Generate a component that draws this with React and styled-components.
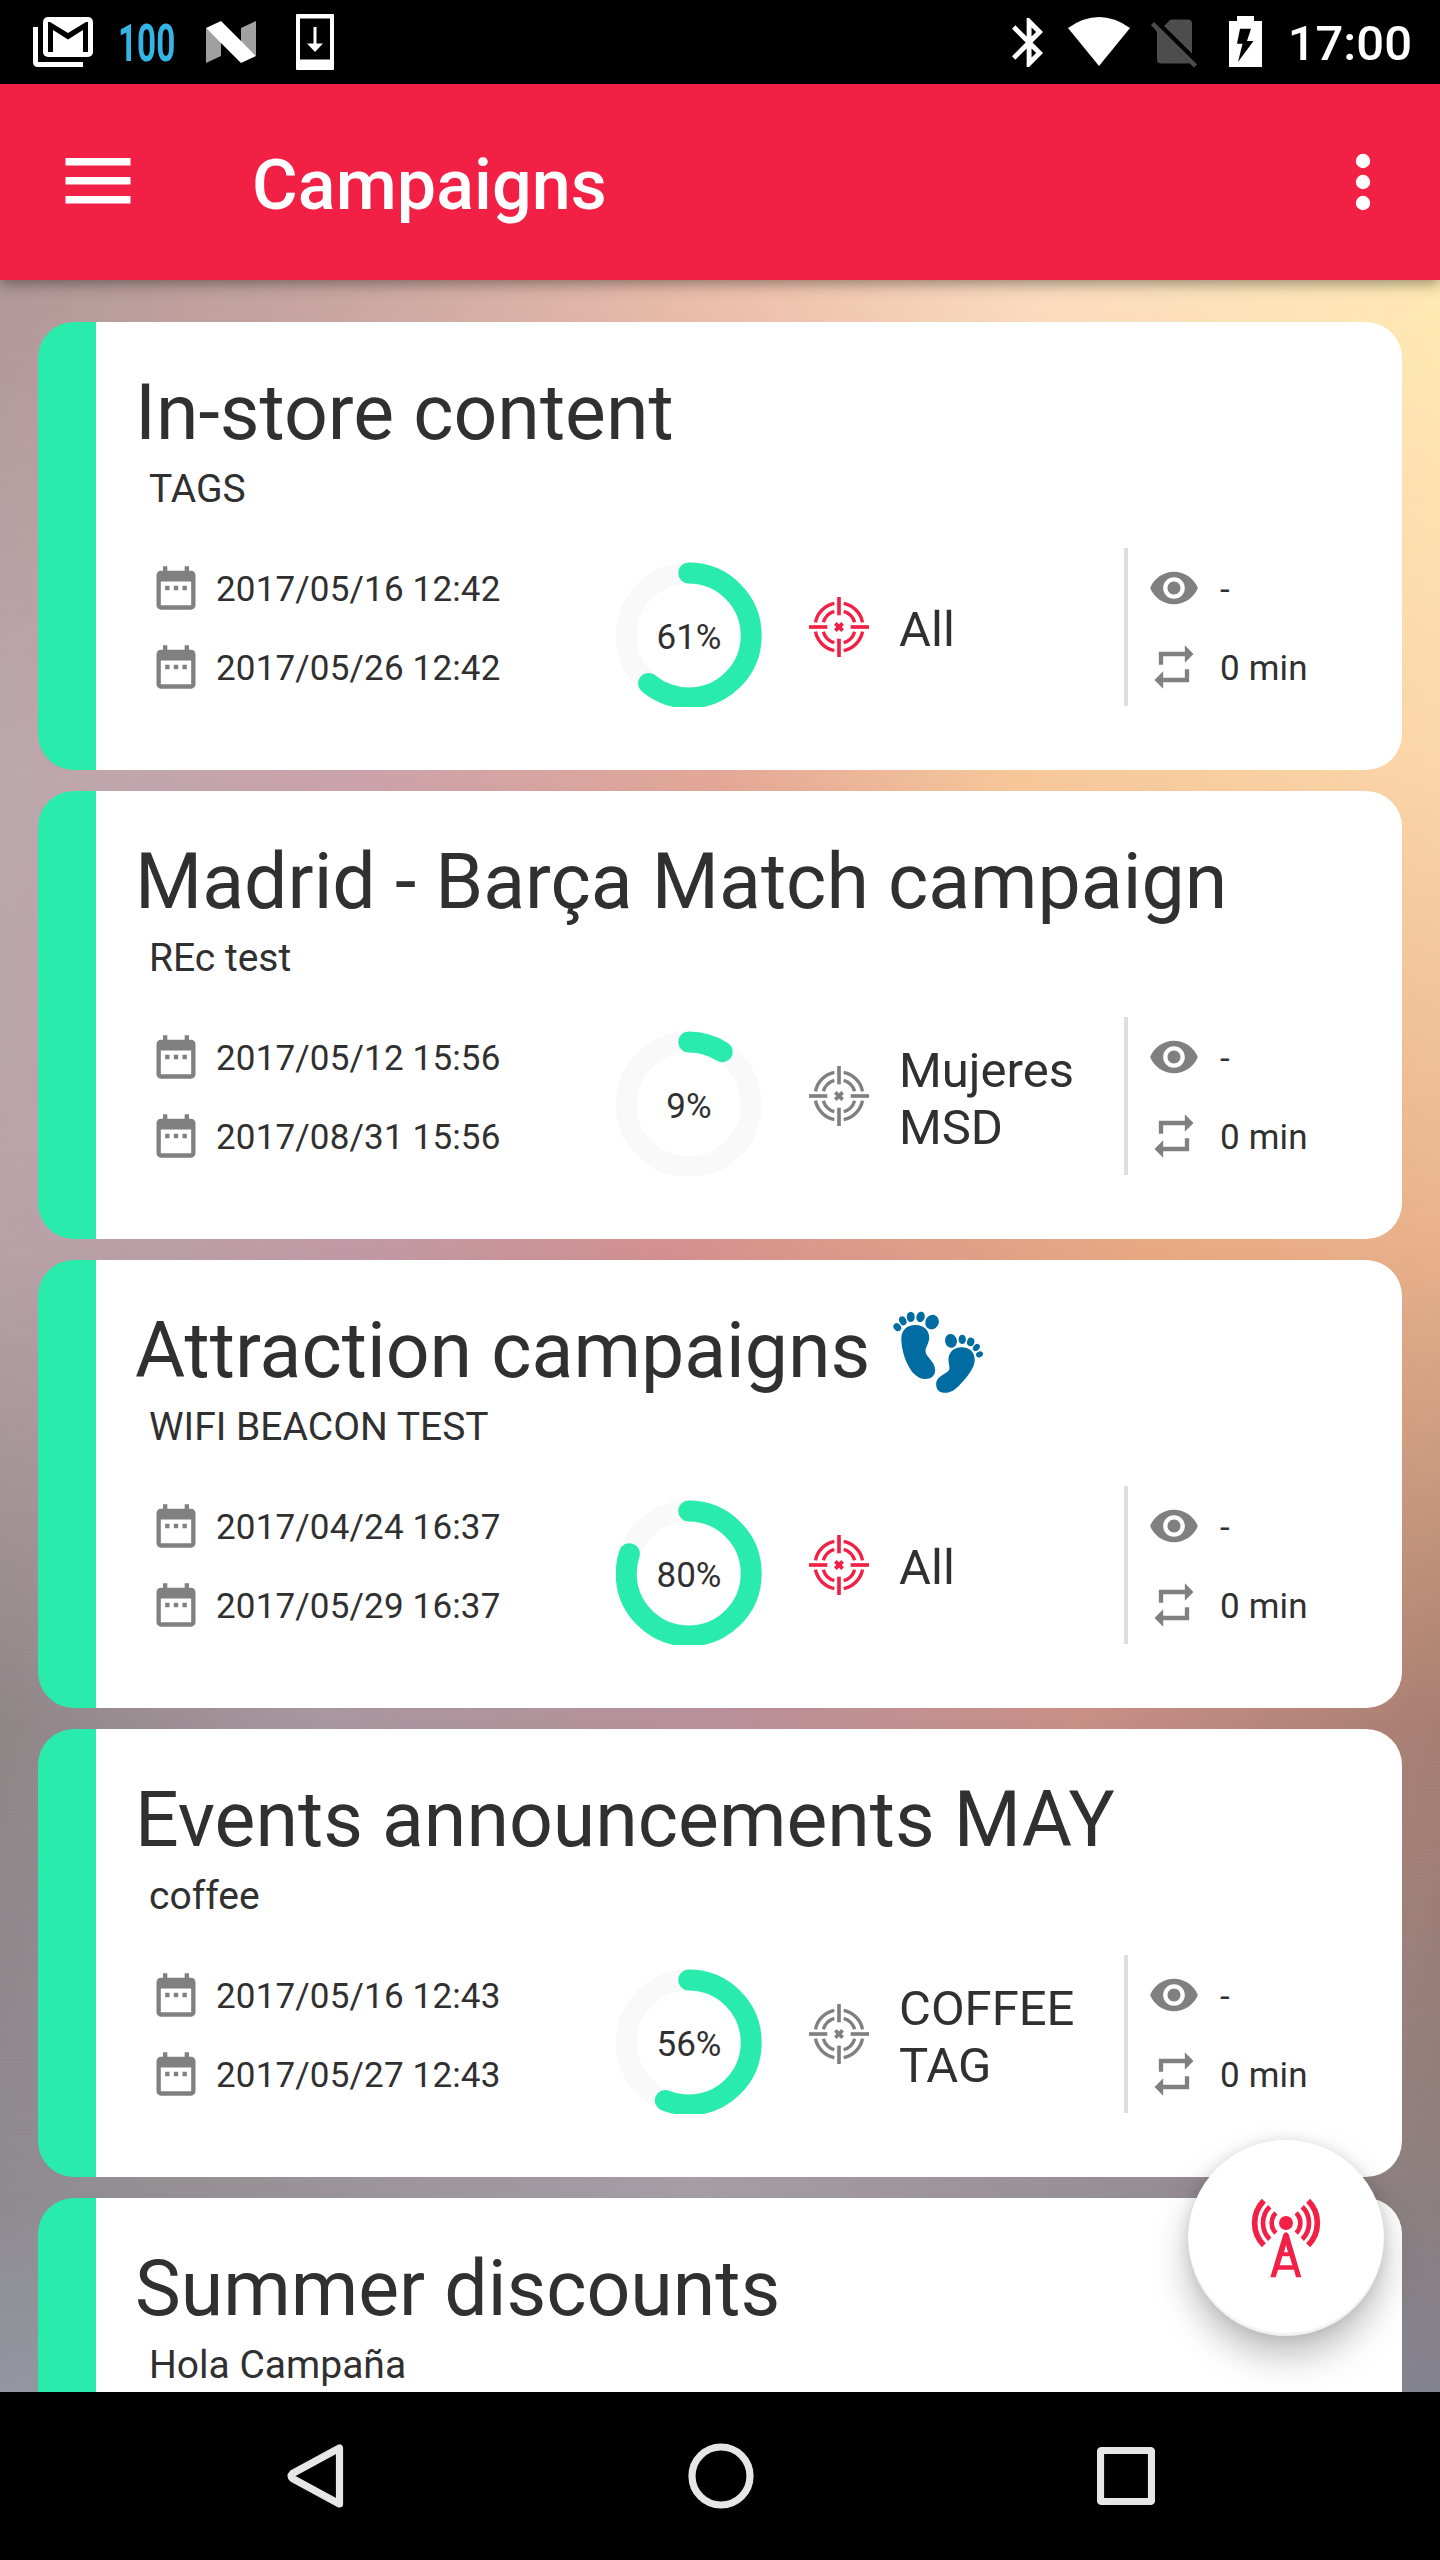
import React from 'react'
import styled, { createGlobalStyle } from 'styled-components'

const GREEN = '#29ecac'
const RED = '#f32046'
const GREY = '#808080'

const campaigns = [
  {
    id: 1,
    title: 'In-store content',
    subtitle: 'TAGS',
    from: '2017/05/16 12:42',
    to: '2017/05/26 12:42',
    progress: 61,
    target: 'All'
  },
  {
    id: 2,
    title: 'Madrid - Barça Match campaign',
    subtitle: 'REc test',
    from: '2017/05/12 15:56',
    to: '2017/08/31 15:56',
    progress: 9,
    target: 'Mujeres MSD'
  },
  {
    id: 3,
    title: 'Attraction campaigns',
    footprints: true,
    subtitle: 'WIFI BEACON TEST',
    from: '2017/04/24 16:37',
    to: '2017/05/29 16:37',
    progress: 80,
    target: 'All'
  },
  {
    id: 4,
    title: 'Events announcements MAY',
    subtitle: 'coffee',
    from: '2017/05/16 12:43',
    to: '2017/05/27 12:43',
    progress: 56,
    target: 'COFFEE TAG'
  },
  {
    id: 5,
    title: 'Summer discounts',
    subtitle: 'Hola Campaña'
  }
]

// horizontal colour rows of the wallpaper, each one fades into the next
const bands = [
  { start: 0, end: 0, colors: '#b29899 0%, #cba8a1 25%, #edbfac 50%, #fadcc0 72%, #ffeab4 100%' },
  { start: 10, end: 500, colors: '#bba8ac 0%, #cba2ab 25%, #e3a797 50%, #f6c699 70%, #fad5a8 100%' },
  { start: 500, end: 970, colors: '#b8a2a8 0%, #bf99a5 25%, #d2908f 46%, #e8a982 80%, #e8b18a 100%' },
  { start: 970, end: 1438, colors: '#8f8688 0%, #a8969e 22%, #b8909a 50%, #c98f85 75%, #a87f72 100%' },
  { start: 1438, end: 1907, colors: '#8f8b8f 0%, #a69da5 48%, #968d95 80%, #8c7e7e 100%' },
  { start: 1907, end: 2112, colors: '#9296a0 0%, #9a98a2 50%, #82828e 100%' }
]

const DateIcon = () => (
  <Glyph viewBox='0 0 24 24'>
    <path d='M9 11H7v2h2v-2zm4 0h-2v2h2v-2zm4 0h-2v2h2v-2zm2-7h-1V2h-2v2H8V2H6v2H5c-1.11 0-1.99.9-1.99 2L3 20c0 1.1.89 2 2 2h14c1.1 0 2-.9 2-2V6c0-1.1-.9-2-2-2zm0 16H5V9h14v11z' />
  </Glyph>
)

const EyeIcon = () => (
  <Glyph viewBox='0 0 24 24'>
    <path d='M12 4.5C7 4.5 2.73 7.61 1 12c1.73 4.39 6 7.5 11 7.5s9.27-3.11 11-7.5c-1.73-4.39-6-7.5-11-7.5zM12 17c-2.76 0-5-2.24-5-5s2.24-5 5-5 5 2.24 5 5-2.24 5-5 5zm0-8c-1.66 0-3 1.34-3 3s1.34 3 3 3 3-1.34 3-3-1.34-3-3-3z' />
  </Glyph>
)

const RepeatIcon = () => (
  <Glyph viewBox='0 0 24 24'>
    <path d='M7 7h10v3l4-4-4-4v3H5v6h2V7zm10 10H7v-3l-4 4 4 4v-3h12v-6h-2v4z' />
  </Glyph>
)

const TargetIcon = ({ color }) => (
  <svg width='60' height='60' viewBox='0 0 180 180' fill='none' stroke={color}>
    {[0, 90, 180, 270].map((angle) => (
      <g key={angle} transform={`rotate(${angle} 90 90)`}>
        <path strokeWidth='11' d='M90 0V55' />
        <path strokeWidth='10' d='M104 19.4A72 72 0 0 1 160.6 76M104 43A49 49 0 0 1 137 76' />
      </g>
    ))}
    <path strokeWidth='11' d='M79 79L101 101M101 79L79 101' />
  </svg>
)

const Footprints = () => (
  <FootprintsSvg viewBox='98 150 274 252'>
    <path d='M123 235C124 210 140 195 165 195C192 195 208 212 207 235C206 250 195 262 196 275C197 290 225 305 225 330C225 348 212 357 195 357C150 357 123 280 123 235z' />
    <ellipse cx='111' cy='201' rx='10.5' ry='13' transform='rotate(-42 111 201)' />
    <ellipse cx='127.5' cy='182' rx='10.5' ry='14' transform='rotate(-25 127.5 182)' />
    <ellipse cx='151.5' cy='170.5' rx='12' ry='15.5' />
    <ellipse cx='181' cy='170.5' rx='12.5' ry='16' transform='rotate(15 181 170.5)' />
    <ellipse cx='215.5' cy='186' rx='20' ry='22.5' transform='rotate(30 215.5 186)' />
    <path d='M305 262C330 262 344 278 344 300C344 325 318 355 300 374C285 390 272 399 255 399C238 399 228 390 228 373C228 345 268 342 268 325C268 315 265 310 265 300C265 278 280 262 305 262z' />
    <ellipse cx='272.5' cy='242.5' rx='18' ry='21' transform='rotate(-12 272.5 242.5)' />
    <ellipse cx='306.5' cy='238' rx='11' ry='14' />
    <ellipse cx='332' cy='245.5' rx='11' ry='13' transform='rotate(15 332 245.5)' />
    <ellipse cx='349' cy='262.5' rx='9' ry='12' transform='rotate(42 349 262.5)' />
    <ellipse cx='358.5' cy='283' rx='8.5' ry='11' transform='rotate(65 358.5 283)' />
  </FootprintsSvg>
)

const TowerIcon = () => (
  <svg width='72' height='82' viewBox='330 290 216 246' fill='none' stroke={RED}>
    <circle cx='438' cy='368' r='21' fill={RED} stroke='none' />
    {[0, 180].map((angle) => (
      <g key={angle} transform={`rotate(${angle} 438 368)`}>
        <path strokeWidth='14' d='M468.4 337.6A43 43 0 0 1 468.4 398.4' />
        <path strokeWidth='14' d='M486.8 319.2A69 69 0 0 1 486.8 416.8' />
        <path strokeWidth='17' d='M504.5 301.5A94 94 0 0 1 504.5 434.5' />
      </g>
    ))}
    <path
      fill={RED}
      stroke='none'
      fillRule='evenodd'
      d='M430 402Q438 390 446 402L484 531H468L462 508H414L407 531H391zM438 434L432 456H444zM427 468L419 495H457L449 468z'
    />
  </svg>
)

const ProgressRing = ({ value }) => {
  const radius = 62.5
  const length = 2 * Math.PI * radius
  return (
    <Ring>
      <svg width='146' height='145' viewBox='0 0 146 145' fill='none' strokeWidth='21'>
        <circle cx='72.7' cy='73.5' r={radius} stroke='#f9f9f9' />
        <circle
          cx='72.7'
          cy='73.5'
          r={radius}
          stroke={GREEN}
          strokeLinecap='round'
          strokeDasharray={`${(length * value) / 100} ${length}`}
          transform='rotate(-90 72.7 73.5)'
        />
      </svg>
      <RingLabel>{value}%</RingLabel>
    </Ring>
  )
}

const StatusBar = () => (
  <StatusRow>
    <StatusGroup>
      <svg width='60' height='84' viewBox='33 0 60 84'>
        <path fill='#fff' d='M33 27h5v35h45v5H38q-5 0-5-5z' />
        <rect x='43' y='17' width='50' height='40' rx='5' fill='#fff' />
        <path d='M48 52V22H50L68 33L86 22H88V52H83V30L68 39.5L53 30V52z' />
      </svg>
      <BatteryLevel>
        <span>100</span>
      </BatteryLevel>
      <svg width='50' height='84' viewBox='206 0 50 84'>
        <path fill='#a0a0a0' d='M206 28L221 42V56L206 63zM241 28L256 21V56L241 42z' />
        <path fill='#fff' d='M206 28L221 21L256 56L241 63z' />
      </svg>
      <DownloadIcon width='38' height='84' viewBox='296 0 38 84'>
        <path
          fill='#fff'
          fillRule='evenodd'
          d='M297 14H333Q334 14 334 15V69Q334 70 333 70H297Q296 70 296 69V15Q296 14 297 14zM300 18.5V59.5H330V18.5zM313.5 27H316.5V43.5H323L315 52L307 43.5H313.5z'
        />
      </DownloadIcon>
    </StatusGroup>
    <StatusGroup>
      <svg width='31' height='84' viewBox='1012 0 31 84'>
        <g transform='translate(999.7 13.1) scale(2.45)' fill='#fff'>
          <path d='M17.71 7.71L12 2h-1v7.59L6.41 5 5 6.41 10.59 12 5 17.59 6.41 19 11 14.41V22h1l5.71-5.71-4.3-4.29 4.3-4.29zM13 5.83l1.88 1.88L13 9.59V5.83zm1.88 10.46L13 18.17v-3.76l1.88 1.88z' />
        </g>
      </svg>
      <WifiIcon width='62' height='84' viewBox='1068 0 62 84'>
        <path fill='#fff' d='M1099 66L1068 28Q1099 6 1130 28z' />
      </WifiIcon>
      <NoSimIcon width='47' height='84' viewBox='1151 0 47 84'>
        <path
          fill='#4d4d4d'
          d='M1164 26L1170.5 19.5H1188Q1192 19.5 1192 23.5V53.5zM1157 32L1154 28L1157 30L1190 63.5H1161Q1157 63.5 1157 59.5z'
        />
        <path stroke='#4d4d4d' strokeWidth='4.5' d='M1152.5 23.5L1195.5 66' />
      </NoSimIcon>
      <BatteryIcon width='33' height='84' viewBox='1229 0 33 84'>
        <path fill='#fff' d='M1237 16H1254V21H1262V67H1229V21H1237z' />
        <path d='M1240 28.7H1251L1247 41H1253.5L1238 62L1242.5 43.7H1237z' />
      </BatteryIcon>
      <Clock>17:00</Clock>
    </StatusGroup>
  </StatusRow>
)

const CampaignDetails = ({ campaign }) => (
  <Details>
    <Column>
      <Line>
        <DateIcon />
        <Label>{campaign.from}</Label>
      </Line>
      <Line>
        <DateIcon />
        <Label>{campaign.to}</Label>
      </Line>
    </Column>
    <ProgressRing value={campaign.progress} />
    <Target>
      <TargetIcon color={campaign.target === 'All' ? RED : GREY} />
      <TargetName>{campaign.target}</TargetName>
    </Target>
    <Stats>
      <Line>
        <EyeIcon />
        <Label>-</Label>
      </Line>
      <Line>
        <RepeatIcon />
        <Label>0 min</Label>
      </Line>
    </Stats>
  </Details>
)

const CampaignCard = ({ campaign }) => (
  <Card>
    <Title>
      {campaign.title}
      {campaign.footprints && <Footprints />}
    </Title>
    <Subtitle>{campaign.subtitle}</Subtitle>
    {campaign.from && <CampaignDetails campaign={campaign} />}
  </Card>
)

const App = () => (
  <Screen>
    <GlobalStyle />
    <StatusBar />
    <AppBar>
      <MenuIcon width='66' height='46' viewBox='0 0 66 46'>
        <path d='M0.5 0h65v7.5h-65zM0.5 19h65v7.5h-65zM0.5 38h65v7.5h-65z' />
      </MenuIcon>
      <AppTitle>Campaigns</AppTitle>
      <svg width='16' height='58' viewBox='0 0 16 58' fill='#fff'>
        <circle cx='8' cy='8' r='7.2' />
        <circle cx='8' cy='29' r='7.2' />
        <circle cx='8' cy='50' r='7.2' />
      </svg>
    </AppBar>
    <Content>
      {bands.map((band) => (
        <Band key={band.end} $start={band.start} $end={band.end} $colors={band.colors} />
      ))}
      <List>
        {campaigns.map((campaign) => (
          <CampaignCard key={campaign.id} campaign={campaign} />
        ))}
      </List>
      <Fab>
        <TowerIcon />
      </Fab>
    </Content>
    <NavBar>
      <svg width='58' height='66' viewBox='0 0 58 66'>
        <path d='M52.5 5V61L5.5 35.5Q3 33 5.5 30.5z' />
      </svg>
      <svg width='66' height='66' viewBox='0 0 66 66'>
        <circle cx='33' cy='33' r='29' />
      </svg>
      <svg width='58' height='66' viewBox='0 0 58 66'>
        <rect x='3.5' y='7.5' width='51' height='51' rx='1' />
      </svg>
    </NavBar>
  </Screen>
)

const GlobalStyle = createGlobalStyle`
  body {
    margin: 0;
    background: #000;
    font-family: Roboto, 'Liberation Sans', sans-serif;
    color: #303030;
  }
  svg {
    display: block;
    flex: none;
  }
`

const Screen = styled.div`
  display: flex;
  flex-direction: column;
  width: 1440px;
  height: 2560px;
  overflow: hidden;
`

const StatusRow = styled.div`
  flex: none;
  display: flex;
  justify-content: space-between;
  height: 84px;
  padding: 0 28px 0 33px;
  background: #000;
`

const StatusGroup = styled.div`
  display: flex;
`

const BatteryLevel = styled.div`
  width: 60px;
  margin: 0 28px 0 25px;
  font-size: 52px;
  font-weight: 700;
  line-height: 87px;
  color: #33b5e5;
  span {
    display: inline-block;
    transform: scaleX(0.64);
    transform-origin: left;
  }
`

const DownloadIcon = styled.svg`
  margin-left: 40px;
`

const WifiIcon = styled.svg`
  margin-left: 25px;
`

const NoSimIcon = styled.svg`
  margin-left: 21px;
`

const BatteryIcon = styled.svg`
  margin-left: 31px;
`

const Clock = styled.div`
  margin-left: 26px;
  font-size: 49px;
  font-weight: 500;
  line-height: 88px;
  color: #fff;
`

const AppBar = styled.div`
  flex: none;
  position: relative;
  z-index: 1;
  display: flex;
  align-items: center;
  height: 196px;
  padding: 0 69px 0 65px;
  box-sizing: border-box;
  background: ${RED};
  box-shadow: 0 4px 14px rgba(0, 0, 0, 0.4);
`

const MenuIcon = styled.svg`
  margin-bottom: 3px;
  fill: #fff;
`

const AppTitle = styled.div`
  flex: 1;
  margin-left: 121px;
  padding-top: 6px;
  font-size: 70px;
  font-weight: 500;
  line-height: 82px;
  letter-spacing: 0.1px;
  color: #fff;
`

const Content = styled.div`
  flex: 1;
  min-height: 0;
  position: relative;
  overflow: hidden;
`

const Band = styled.div`
  position: absolute;
  inset: 0;
  background: linear-gradient(90deg, ${({ $colors }) => $colors});
  mask-image: linear-gradient(
    180deg,
    transparent ${({ $start }) => $start}px,
    #000 ${({ $end }) => $end}px
  );
`

const List = styled.div`
  position: relative;
  display: flex;
  flex-direction: column;
  gap: 21px;
  padding: 42px 38px 0;
`

const Card = styled.div`
  height: 448px;
  padding: 46px 0 0 39px;
  box-sizing: border-box;
  border-left: 58px solid ${GREEN};
  border-radius: 36px;
  background: #fff;
`

const Title = styled.div`
  display: flex;
  align-items: center;
  font-size: 77px;
  line-height: 90px;
  white-space: nowrap;
`

const FootprintsSvg = styled.svg`
  width: 91px;
  height: 84px;
  margin: 2px 0 0 23px;
  fill: #006ca2;
`

const Subtitle = styled.div`
  margin: 9px 0 0 14px;
  font-size: 39px;
  line-height: 45px;
`

const Details = styled.div`
  display: flex;
  height: 158px;
  margin-top: 36px;
  padding-left: 14px;
`

const Column = styled.div`
  width: 467px;
`

const Line = styled.div`
  display: flex;
  align-items: center;
  height: 79px;
`

const Glyph = styled.svg`
  width: 52px;
  height: 52px;
  margin: 1px 0 0 0.5px;
  fill: ${GREY};
`

const Label = styled.div`
  padding-top: 4px;
  margin-left: 14.5px;
  font-size: 35px;
  line-height: 41px;
  letter-spacing: 0.15px;
`

const Ring = styled.div`
  position: relative;
  width: 146px;
  padding-top: 14px;
`

const RingLabel = styled.div`
  position: absolute;
  top: 69px;
  left: 0;
  width: 146px;
  text-align: center;
  font-size: 35px;
  line-height: 41px;
`

const Target = styled.div`
  display: flex;
  align-items: center;
  width: 315px;
  margin-left: 47px;
`

const TargetName = styled.div`
  margin: 0 30px 0 30px;
  padding-top: 5px;
  font-size: 49px;
  line-height: 57px;
`

const Stats = styled.div`
  padding-left: 19px;
  border-left: 4px solid #dedede;
  ${Label} {
    margin-left: 20.5px;
  }
`

const Fab = styled.div`
  position: absolute;
  right: 56px;
  bottom: 56px;
  display: flex;
  align-items: center;
  justify-content: center;
  width: 196px;
  height: 196px;
  box-sizing: border-box;
  border-radius: 50%;
  background: #fff;
  box-shadow: 0 20px 36px rgba(0, 0, 0, 0.26), 0 0 14px rgba(0, 0, 0, 0.1),
    inset 0 -3px 2px rgba(0, 0, 0, 0.06);
`

const NavBar = styled.div`
  flex: none;
  display: flex;
  align-items: center;
  justify-content: space-between;
  height: 168px;
  padding: 0 285px 0 287px;
  box-sizing: border-box;
  background: #000;
  fill: none;
  stroke: #e6e6e6;
  stroke-width: 7.2px;
  stroke-linejoin: round;
`

export default App
